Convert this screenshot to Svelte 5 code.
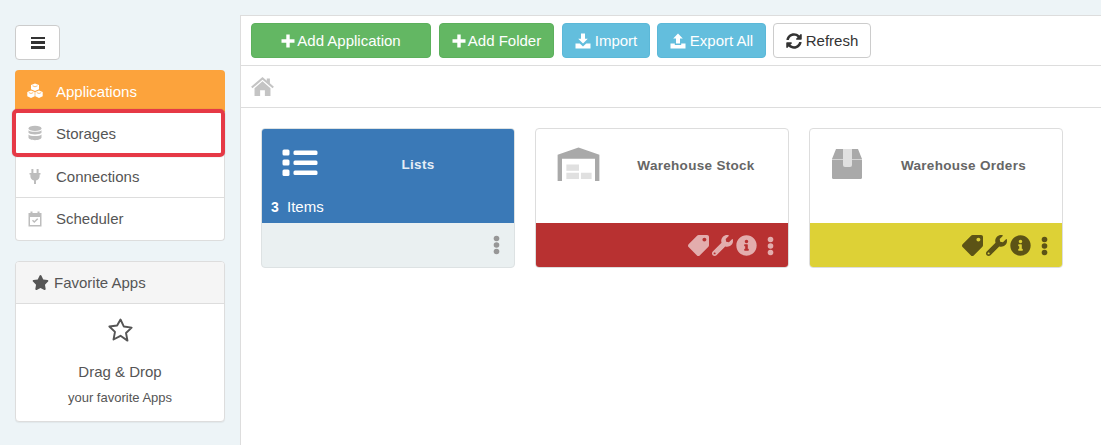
<script lang="ts">
	const nav = [
		{ label: 'Applications', icon: 'cubes', active: true },
		{ label: 'Storages', icon: 'database', marked: true },
		{ label: 'Connections', icon: 'plug' },
		{ label: 'Scheduler', icon: 'calendar' }
	];

	const actions = [
		{ label: 'Add Application', icon: 'plus', kind: 'green', width: 180 },
		{ label: 'Add Folder', icon: 'plus', kind: 'green', width: 115 },
		{ label: 'Import', icon: 'import', kind: 'blue', width: 88 },
		{ label: 'Export All', icon: 'export', kind: 'blue', width: 109 },
		{ label: 'Refresh', icon: 'refresh', kind: 'plain', width: 98 }
	];

	const cards = [
		{ title: 'Lists', tone: 'blue', icon: 'list', count: 3 },
		{ title: 'Warehouse Stock', tone: 'red', icon: 'warehouse' },
		{ title: 'Warehouse Orders', tone: 'yellow', icon: 'box' }
	];

	const STAR =
		'M259.3 17.8L194 150.2 47.9 171.5c-26.2 3.8-36.7 36.1-17.7 54.6l105.7 103-25 145.5c-4.5 26.3 23.2 46 46.4 33.7L288 439.6l130.7 68.7c23.2 12.2 50.9-7.4 46.4-33.7l-25-145.5 105.7-103c19-18.5 8.5-50.8-17.7-54.6L382 150.2 316.7 17.8c-11.7-23.6-45.6-23.9-57.4 0z';
	const INFO =
		'M256 8C119 8 8 119.1 8 256c0 137 111 248 248 248s248-111 248-248C504 119.1 393 8 256 8zm0 110c23.2 0 42 18.8 42 42s-18.8 42-42 42-42-18.8-42-42 18.8-42 42-42zm56 254c0 6.6-5.4 12-12 12h-88c-6.6 0-12-5.4-12-12v-24c0-6.6 5.4-12 12-12h12v-64h-12c-6.6 0-12-5.4-12-12v-24c0-6.6 5.4-12 12-12h64c6.6 0 12 5.4 12 12v100h12c6.6 0 12 5.4 12 12v24z';
	const WRENCH =
		'M507.73 109.1c-2.24-9.03-13.54-12.09-20.12-5.51l-74.36 74.36-67.88-11.31-11.31-67.88 74.36-74.36c6.62-6.62 3.43-17.9-5.66-20.16-47.38-11.74-99.55.91-136.58 37.93-39.64 39.64-50.55 97.1-34.05 147.2L18.74 402.76c-24.99 24.99-24.99 65.51 0 90.5 24.99 24.99 65.51 24.99 90.5 0l213.21-213.21c50.12 16.71 107.47 5.68 147.37-34.22 37.07-37.07 49.7-89.32 37.91-136.73zM64 472c-13.25 0-24-10.75-24-24 0-13.26 10.75-24 24-24s24 10.74 24 24c0 13.25-10.75 24-24 24z';
	const TAG =
		'M0 252.118V48C0 21.49 21.49 0 48 0h204.118a48 48 0 0 1 33.941 14.059l211.882 211.882c18.745 18.745 18.745 49.137 0 67.882L293.823 497.941c-18.745 18.745-49.137 18.745-67.882 0L14.059 286.059A48 48 0 0 1 0 252.118zM112 64c-26.51 0-48 21.49-48 48s21.49 48 48 48 48-21.49 48-48-21.49-48-48-48z';
	const SYNC =
		'M370.72 133.28C339.458 104.008 298.888 87.962 255.848 88c-77.458.068-144.328 53.178-162.791 126.85-1.344 5.363-6.122 9.15-11.651 9.15H24.103c-7.498 0-13.194-6.807-11.807-14.176C33.933 94.924 134.813 8 256 8c66.448 0 126.791 26.136 171.315 68.685L463.03 40.97C478.149 25.851 504 36.559 504 57.941V192c0 13.255-10.745 24-24 24H345.941c-21.382 0-32.09-25.851-16.971-40.971l41.75-41.749zM32 296h134.059c21.382 0 32.09 25.851 16.971 40.971l-41.75 41.75c31.262 29.273 71.835 45.319 114.876 45.28 77.418-.07 144.315-53.144 162.787-126.849 1.344-5.363 6.122-9.15 11.651-9.15h57.304c7.498 0 13.194 6.807 11.807 14.176C478.067 417.076 377.187 504 256 504c-66.448 0-126.791-26.136-171.315-68.685L48.97 471.03C33.851 486.149 8 475.441 8 454.059V320c0-13.255 10.745-24 24-24z';
</script>

{#snippet navIcon(name: string)}
	<svg class="nav-icon" viewBox="0 0 16 16" aria-hidden="true">
		{#if name === 'cubes'}
			<path d="M8 .5l4 1.600v4.200L8 8 4 6.300V2.100z" />
			<path d="M4 7.400l3.700 1.500v4.400L4 15 .3 13.300V8.900z" />
			<path d="M12 7.400l3.700 1.500v4.400L12 15l-3.700-1.700V8.900z" />
			<path class="cube-line" d="M5.500 2.800L8 3.800l2.500-1M1.800 9.600l2.200.9 2.200-.9M9.800 9.600l2.200.9 2.200-.9" />
		{:else if name === 'database'}
			<ellipse cx="8" cy="3.400" rx="6.500" ry="2.600" />
			<path d="M1.500 5.200C3 7.400 13 7.400 14.500 5.200v2.600C13 10 3 10 1.500 7.800z" />
			<path d="M1.500 9.400C3 11.600 13 11.600 14.500 9.400v3.200c0 1.500-2.900 2.600-6.500 2.600s-6.500-1.100-6.500-2.600z" />
		{:else if name === 'plug'}
			<path d="M4.400 1h2v4h3.200V1h2v4h1.900v1.600h-.9v1.600c0 2.300-1.500 3.900-3.600 4.300V16H7v-3.500c-2.100-.4-3.600-2-3.600-4.300V6.600h-.9V5h1.900z" />
		{:else if name === 'calendar'}
			<path
				fill-rule="evenodd"
				d="M3.500.5h2V2h5V.5h2V2h2v13.500h-13V2h2zM3 6v8h10V6z"
			/>
			<path d="M5 9.800l1-1 1.300 1.300 2.900-2.900 1 1-3.900 3.900z" />
		{/if}
	</svg>
{/snippet}

{#snippet actionIcon(name: string)}
	{#if name === 'plus'}
		<svg class="btn-icon" viewBox="0 0 14 14" aria-hidden="true">
			<path d="M5.300.5h3.400v4.800h4.800v3.400H8.700v4.800H5.300V8.700H.5V5.300h4.800z" />
		</svg>
	{:else if name === 'import'}
		<svg class="btn-icon wide" viewBox="0 0 16 16" aria-hidden="true">
			<path d="M6 .5h4v5.300h2.800L8 10.600 3.200 5.800H6z" />
			<path d="M.5 10.500h4.300L8 13.500l3.200-3h4.300v5H.5z" />
		</svg>
	{:else if name === 'export'}
		<svg class="btn-icon wide" viewBox="0 0 16 16" aria-hidden="true">
			<path d="M8 .5l4.800 4.900H10v5.200H6V5.400H3.200z" />
			<path d="M.5 10.500h4.300v1.600h6.400v-1.600h4.300v5H.5z" />
		</svg>
	{:else if name === 'refresh'}
		<svg class="btn-icon wide" viewBox="0 0 512 512" aria-hidden="true"><path d={SYNC} /></svg>
	{/if}
{/snippet}

{#snippet cardIcon(name: string)}
	{#if name === 'list'}
		<svg class="card-icon list" viewBox="0 2 36 27" aria-hidden="true">
			<rect x="0.500" y="2" width="7" height="6" rx="1.500" />
			<rect x="0.500" y="12" width="7" height="6" rx="1.500" />
			<rect x="0.500" y="22" width="7" height="6.500" rx="1.500" />
			<rect x="11.500" y="3" width="24" height="4.500" rx="1.500" />
			<rect x="11.500" y="13" width="24" height="4.500" rx="1.500" />
			<rect x="11.500" y="23" width="24" height="4.500" rx="1.500" />
		</svg>
	{:else if name === 'warehouse'}
		<svg class="card-icon warehouse" viewBox="0 0 44 35" aria-hidden="true">
			<path d="M22 .5L43.500 8v27H39V12H5v23H.5V8z" fill="#a9a9a9" />
			<rect x="9.500" y="18" width="13" height="6.500" fill="#e0e0e0" />
			<rect x="9.500" y="26.500" width="13" height="6.500" fill="#e0e0e0" />
			<rect x="24.500" y="26.500" width="11" height="6.500" fill="#e0e0e0" />
		</svg>
	{:else if name === 'box'}
		<svg class="card-icon box" viewBox="0 0 30 30" aria-hidden="true">
			<path d="M4 0h22l4 10v18.500a1.500 1.500 0 0 1-1.500 1.500h-27A1.500 1.500 0 0 1 0 28.500V10z" fill="#a9a9a9" />
			<path d="M0 10.500h30" stroke="#fff" stroke-width="0.500" />
			<path d="M11 0h9v16a2 2 0 0 1-2 2h-5a2 2 0 0 1-2-2z" fill="#e0e0e0" />
		</svg>
	{/if}
{/snippet}

<div class="page">
	<aside class="sidebar">
		<button type="button" class="toggle" aria-label="Toggle menu">
			<span></span><span></span><span></span>
		</button>

		<nav class="nav">
			{#each nav as item (item.label)}
				<div class="nav-item" class:active={item.active} class:marked={item.marked}>
					{@render navIcon(item.icon)}
					<span>{item.label}</span>
				</div>
			{/each}
		</nav>

		<section class="favorites">
			<header class="fav-head">
				<svg class="fav-star" viewBox="0 0 576 512" aria-hidden="true"><path d={STAR} /></svg>
				Favorite Apps
			</header>
			<div class="fav-body">
				<svg class="fav-outline" viewBox="0 0 24 24" aria-hidden="true">
					<path d="M12 2.200l3 6.300 6.900.9-5 4.800 1.300 6.800L12 16.700 5.800 20l1.300-6.800-5-4.800 6.900-.9z" />
				</svg>
				<p class="drag">Drag &amp; Drop</p>
				<p class="drag-sub">your favorite Apps</p>
			</div>
		</section>
	</aside>

	<main class="main">
		<div class="toolbar">
			{#each actions as action (action.label)}
				<button
					type="button"
					class="action {action.kind}"
					style="width: {action.width}px"
				>
					{@render actionIcon(action.icon)}
					{action.label}
				</button>
			{/each}
		</div>

		<div class="crumbs">
			<svg class="home" viewBox="0 0 24 20" aria-hidden="true">
				<path d="M12 0l4.500 3.900V1.500h3.300v5.200L24 10.300l-1.400 1.500L12 2.800 1.400 11.800 0 10.300z" />
				<path d="M12 4.600l8.400 7.200V20h-5.900v-6h-5v6H3.600v-8.200z" />
			</svg>
		</div>

		<div class="cards">
			{#each cards as card (card.title)}
				<article class="card {card.tone}">
					<div class="card-top">
						<div class="card-row">
							<div class="card-icon-wrap">{@render cardIcon(card.icon)}</div>
							<h3>{card.title}</h3>
						</div>
						{#if card.count}
							<p class="count"><b>{card.count}</b> Items</p>
						{/if}
					</div>
					<div class="card-bottom">
						{#if card.tone !== 'blue'}
							<svg class="tool tag" viewBox="0 0 512 512" aria-hidden="true"><path d={TAG} /></svg>
							<svg class="tool" viewBox="0 0 512 512" aria-hidden="true"><path d={WRENCH} /></svg>
							<svg class="tool" viewBox="0 0 512 512" aria-hidden="true"><path d={INFO} /></svg>
						{/if}
						<svg class="dots" viewBox="0 0 6 20" aria-hidden="true">
							<circle cx="3" cy="3.500" r="2.800" />
							<circle cx="3" cy="10" r="2.800" />
							<circle cx="3" cy="16.500" r="2.800" />
						</svg>
					</div>
				</article>
			{/each}
		</div>
	</main>
</div>

<style>
	:global(body) {
		background: #edf4f7;
		font-family: 'Liberation Sans', Arial, sans-serif;
		color: #555;
	}

	.page {
		display: flex;
		height: 445px;
		overflow: hidden;
	}

	.sidebar {
		flex: none;
		width: 240px;
		padding: 25px 15px 0;
		box-sizing: border-box;
	}

	.toggle {
		display: flex;
		flex-direction: column;
		justify-content: center;
		gap: 2.250px;
		align-items: center;
		width: 45px;
		height: 35px;
		padding: 0;
		background: #fff;
		border: 1px solid #ccc;
		border-radius: 4px;
	}

	.toggle span {
		width: 14px;
		height: 2.500px;
		background: #333;
	}

	.nav {
		margin-top: 10px;
		height: 171px;
		box-sizing: border-box;
		display: flex;
		flex-direction: column;
		background: #fff;
		border: 1px solid #ddd;
		border-top: none;
		border-radius: 4px;
	}

	.nav-item {
		position: relative;
		flex: none;
		height: 42px;
		display: flex;
		align-items: center;
		gap: 13px;
		padding-left: 11px;
		font-size: 15px;
		color: #555;
		border-bottom: 1px solid #ddd;
	}

	.nav-item:last-child {
		flex: 1;
		height: auto;
		padding-bottom: 1px;
		border-bottom: none;
	}

	.nav-item.active {
		margin: 0 -1px;
		padding-left: 12px;
		background: #fca33c;
		color: #fff;
		border-bottom: none;
		border-radius: 4px 4px 0 0;
	}

	/* Red annotation frame over the Storages row */
	.nav-item.marked::after {
		content: '';
		position: absolute;
		top: -3px;
		bottom: -3px;
		left: -4px;
		right: -1px;
		border: 4px solid #e63946;
		border-radius: 5px;
		box-shadow: 0 0 1px rgba(60, 60, 60, 0.5);
	}

	.nav-icon {
		width: 16px;
		height: 16px;
		fill: #bdbdbd;
		flex: none;
	}

	.nav-item.active .nav-icon {
		fill: #fff;
	}

	.cube-line {
		fill: none;
		stroke: #fca33c;
		stroke-width: 0.700;
	}

	.favorites {
		margin-top: 20px;
		height: 161px;
		background: #fff;
		border: 1px solid #ddd;
		border-radius: 4px;
		box-shadow: 0 1px 1px rgba(0, 0, 0, 0.05);
		box-sizing: border-box;
		overflow: hidden;
	}

	.fav-head {
		display: flex;
		align-items: center;
		gap: 5px;
		height: 40px;
		padding: 0 0 1px 16px;
		background: #f5f5f5;
		border-bottom: 1px solid #ddd;
		font-size: 15px;
		color: #555;
	}

	.fav-star {
		width: 17px;
		height: 15px;
		fill: #555;
	}

	.fav-body {
		display: flex;
		flex-direction: column;
		align-items: center;
	}

	.fav-outline {
		width: 27px;
		height: 27px;
		margin-top: 13px;
		fill: none;
		stroke: #555;
		stroke-width: 1.700;
		stroke-linejoin: round;
	}

	.drag {
		margin: 19px 0 0;
		font-size: 15px;
		line-height: 18px;
		color: #555;
	}

	.drag-sub {
		margin: 9px 0 0;
		font-size: 13px;
		line-height: 15px;
		color: #555;
	}

	.main {
		flex: 1;
		margin-top: 15px;
		background: #fff;
		border-left: 1px solid #ddd;
		border-top: 1px solid #ddd;
		min-width: 0;
	}

	.toolbar {
		display: flex;
		gap: 8px;
		height: 50px;
		box-sizing: border-box;
		padding: 7px 0 0 10px;
		border-bottom: 1px solid #ddd;
	}

	.action {
		display: flex;
		align-items: center;
		justify-content: center;
		gap: 2px;
		height: 35px;
		padding: 0;
		font-family: inherit;
		font-size: 15px;
		border: 1px solid transparent;
		border-radius: 4px;
		color: #fff;
		box-sizing: border-box;
	}

	.action.blue + .action {
		margin-left: -1px;
	}

	.action.green {
		background: #63b763;
		border-color: #5cb05c;
	}

	.action.blue {
		background: #63bedd;
		border-color: #5bb8d8;
	}

	.action.plain {
		background: #fff;
		border-color: #ccc;
		color: #333;
	}

	.btn-icon {
		width: 14px;
		height: 14px;
		fill: currentColor;
	}

	.btn-icon.wide {
		width: 16px;
		height: 16px;
		margin-right: 2px;
	}

	.crumbs {
		display: flex;
		align-items: center;
		height: 42px;
		box-sizing: border-box;
		padding-left: 10px;
		border-bottom: 1px solid #ddd;
	}

	.home {
		width: 23px;
		height: 19px;
		fill: #c4c4c4;
	}

	.cards {
		display: flex;
		gap: 20px;
		padding: 20px 0 0 20px;
	}

	.card {
		width: 254px;
		height: 140px;
		display: flex;
		flex-direction: column;
		box-sizing: border-box;
		border: 1px solid #ddd;
		border-radius: 4px;
		overflow: hidden;
		background: #fff;
	}

	.card-top {
		height: 94px;
		flex: none;
		box-sizing: border-box;
		padding-top: 18px;
	}

	.card-row {
		display: flex;
		align-items: center;
		height: 36px;
	}

	.card-icon-wrap {
		flex: none;
		align-self: flex-start;
		width: 80px;
		padding-left: 21px;
		box-sizing: border-box;
	}

	.card-icon {
		display: block;
	}

	.card-icon.warehouse {
		width: 43px;
		height: 34px;
	}

	.card-icon.box {
		width: 30px;
		height: 30px;
		margin: 2px 0 0 1px;
	}

	.card-icon.list {
		width: 36px;
		height: 28px;
		fill: #fff;
	}

	.card-row h3 {
		flex: 1;
		margin: 0;
		text-align: center;
		font-size: 13.500px;
		font-weight: 700;
		letter-spacing: 0.300px;
		color: #666;
		white-space: nowrap;
	}

	.card.red h3 {
		padding-right: 12px;
	}

	.card.yellow h3 {
		padding-right: 25px;
	}

	.card-bottom {
		flex: 1;
		display: flex;
		align-items: center;
		justify-content: flex-end;
		gap: 3px;
		padding: 0 15px 0 0;
	}

	.card.blue {
		background: #eaf0f1;
		border-color: #dde2e3;
	}

	.card.blue .card-top {
		background: #3a79b7;
		margin: -1px -1px 0;
		padding-top: 21px;
		height: 95px;
	}

	.card.blue .card-row {
		height: 30px;
	}

	.card.blue h3 {
		color: #e4edf6;
		padding-right: 20px;
	}

	.card.blue .card-bottom {
		padding-right: 14px;
	}

	.card.blue .dots {
		fill: #979797;
	}

	.count {
		margin: 18px 0 0 10px;
		font-size: 15px;
		line-height: 20px;
		color: #fff;
	}

	.count b {
		font-size: 14px;
		margin-right: 4px;
	}

	.card.red .card-bottom {
		background: #b83131;
		margin: 0 -1px -1px;
		fill: #e3adad;
	}

	.card.yellow .card-bottom {
		background: #ddd136;
		margin: 0 -1px -1px;
		fill: #5c5316;
	}

	.tool {
		width: 21px;
		height: 21px;
	}

	.tool.tag {
		transform: rotate(90deg);
	}

	.dots {
		width: 7px;
		height: 20px;
		margin-left: 7px;
	}
</style>
